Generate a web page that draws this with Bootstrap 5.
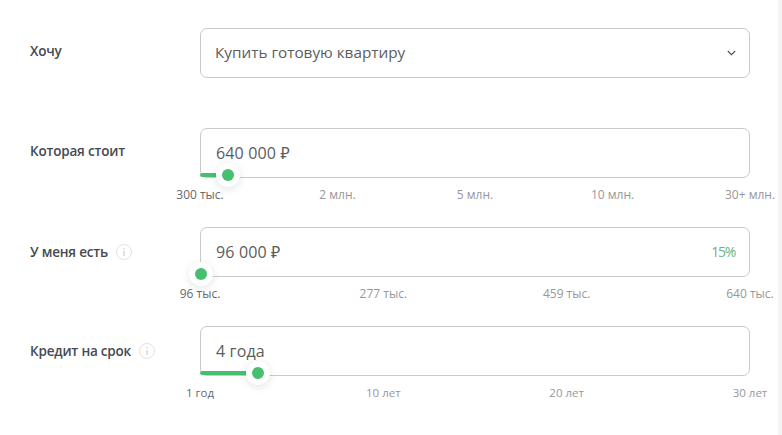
<!DOCTYPE html>
<html lang="ru">
<head>
<meta charset="utf-8">
<title>Калькулятор</title>
<link href="https://cdn.jsdelivr.net/npm/bootstrap@5.3.0/dist/css/bootstrap.min.css" rel="stylesheet">
<style>
html,body{height:100%;overflow:hidden;background:#fff}
body{font-family:"Open Sans","Noto Sans","Liberation Sans",sans-serif;color:#4a4f57}
.calc-page{width:782px;height:435px;padding:28px 0 0 30px;border-right:4px solid #f4f4f4;box-sizing:border-box}
.calc-row{height:99px}
.calc-row.first-row{height:100px}
.calc-label{width:170px;font-size:13.5px;letter-spacing:-.2px;font-weight:600;color:#454a52;line-height:20px;padding-top:13px}
.calc-label.with-info{padding-top:15px}
.calc-field{width:550px;position:relative}
.calc-box{height:50px;border:1px solid #c9c9c9;border-radius:7px;padding:0 14px 0 15px;font-size:16px;letter-spacing:.15px;color:#5a5d60}
.first-row .calc-box{padding:0 14px 2px 14px;font-size:15.3px;letter-spacing:0}
.calc-chev{margin:2px -1px 0 0}
.calc-track{position:absolute;left:0;top:45px;height:4px;background:#48bf70;border-radius:2px}
.calc-thumb{position:absolute;top:35px;width:24px;height:24px;margin-left:-12px;border-radius:50%;background:#fff;box-shadow:0 2px 9px rgba(0,0,0,.11)}
.calc-thumb::after{content:"";position:absolute;left:6px;top:6px;width:12px;height:12px;border-radius:50%;background:#48bf70}
.calc-ticks{font-size:12px;line-height:16px;margin-top:9px;color:#96979a}
.calc-ticks.years{font-size:11.5px}
.calc-tick{width:0;white-space:nowrap}
.calc-tick.on{color:#66686c}
.calc-info{width:16px;height:16px;flex:none;margin-top:2px}
.calc-pct{font-size:14px;letter-spacing:-1.3px;padding-bottom:1px;color:#6db37f}
</style>
</head>
<body>
<main class="calc-page">
  <div class="d-flex calc-row first-row">
    <div class="calc-label">Хочу</div>
    <div class="calc-field">
      <div class="calc-box d-flex align-items-center justify-content-between">
        <span>Купить готовую квартиру</span>
        <svg class="calc-chev" width="9" height="6" viewBox="0 0 9 6" fill="none" stroke="#4a4f57" stroke-width="1.1"><path d="M.8 1l3.7 3.7L8.2 1"/></svg>
      </div>
    </div>
  </div>
  <div class="d-flex calc-row">
    <div class="calc-label">Которая стоит</div>
    <div class="calc-field">
      <div class="calc-box d-flex align-items-center"><span>640 000 ₽</span></div>
      <div class="calc-track" style="width:28px"></div>
      <div class="calc-thumb" style="left:28px"></div>
      <div class="calc-ticks d-flex justify-content-between">
        <div class="calc-tick on d-flex justify-content-center">300 тыс.</div>
        <div class="calc-tick d-flex justify-content-center">2 млн.</div>
        <div class="calc-tick d-flex justify-content-center">5 млн.</div>
        <div class="calc-tick d-flex justify-content-center">10 млн.</div>
        <div class="calc-tick d-flex justify-content-center">30+ млн.</div>
      </div>
    </div>
  </div>
  <div class="d-flex calc-row">
    <div class="calc-label with-info d-flex align-items-start gap-2">У меня есть
      <svg class="calc-info" viewBox="0 0 16 16" fill="none"><circle cx="8" cy="8" r="7.5" stroke="#e2e2e2"/><path d="M8 7v5" stroke="#d6d6d6" stroke-width="1.4"/><circle cx="8" cy="4.8" r=".9" fill="#d6d6d6"/></svg>
    </div>
    <div class="calc-field">
      <div class="calc-box d-flex align-items-center justify-content-between"><span>96 000 ₽</span><span class="calc-pct">15%</span></div>
      <div class="calc-thumb" style="left:1px"></div>
      <div class="calc-ticks d-flex justify-content-between">
        <div class="calc-tick on d-flex justify-content-center">96 тыс.</div>
        <div class="calc-tick d-flex justify-content-center">277 тыс.</div>
        <div class="calc-tick d-flex justify-content-center">459 тыс.</div>
        <div class="calc-tick d-flex justify-content-center">640 тыс.</div>
      </div>
    </div>
  </div>
  <div class="d-flex calc-row">
    <div class="calc-label with-info d-flex align-items-start gap-2">Кредит на срок
      <svg class="calc-info" viewBox="0 0 16 16" fill="none"><circle cx="8" cy="8" r="7.5" stroke="#e2e2e2"/><path d="M8 7v5" stroke="#d6d6d6" stroke-width="1.4"/><circle cx="8" cy="4.8" r=".9" fill="#d6d6d6"/></svg>
    </div>
    <div class="calc-field">
      <div class="calc-box d-flex align-items-center"><span>4 года</span></div>
      <div class="calc-track" style="width:58px"></div>
      <div class="calc-thumb" style="left:58px"></div>
      <div class="calc-ticks years d-flex justify-content-between">
        <div class="calc-tick on d-flex justify-content-center">1 год</div>
        <div class="calc-tick d-flex justify-content-center">10 лет</div>
        <div class="calc-tick d-flex justify-content-center">20 лет</div>
        <div class="calc-tick d-flex justify-content-center">30 лет</div>
      </div>
    </div>
  </div>
</main>
<script src="https://cdn.jsdelivr.net/npm/bootstrap@5.3.0/dist/js/bootstrap.bundle.min.js"></script>
</body>
</html>
